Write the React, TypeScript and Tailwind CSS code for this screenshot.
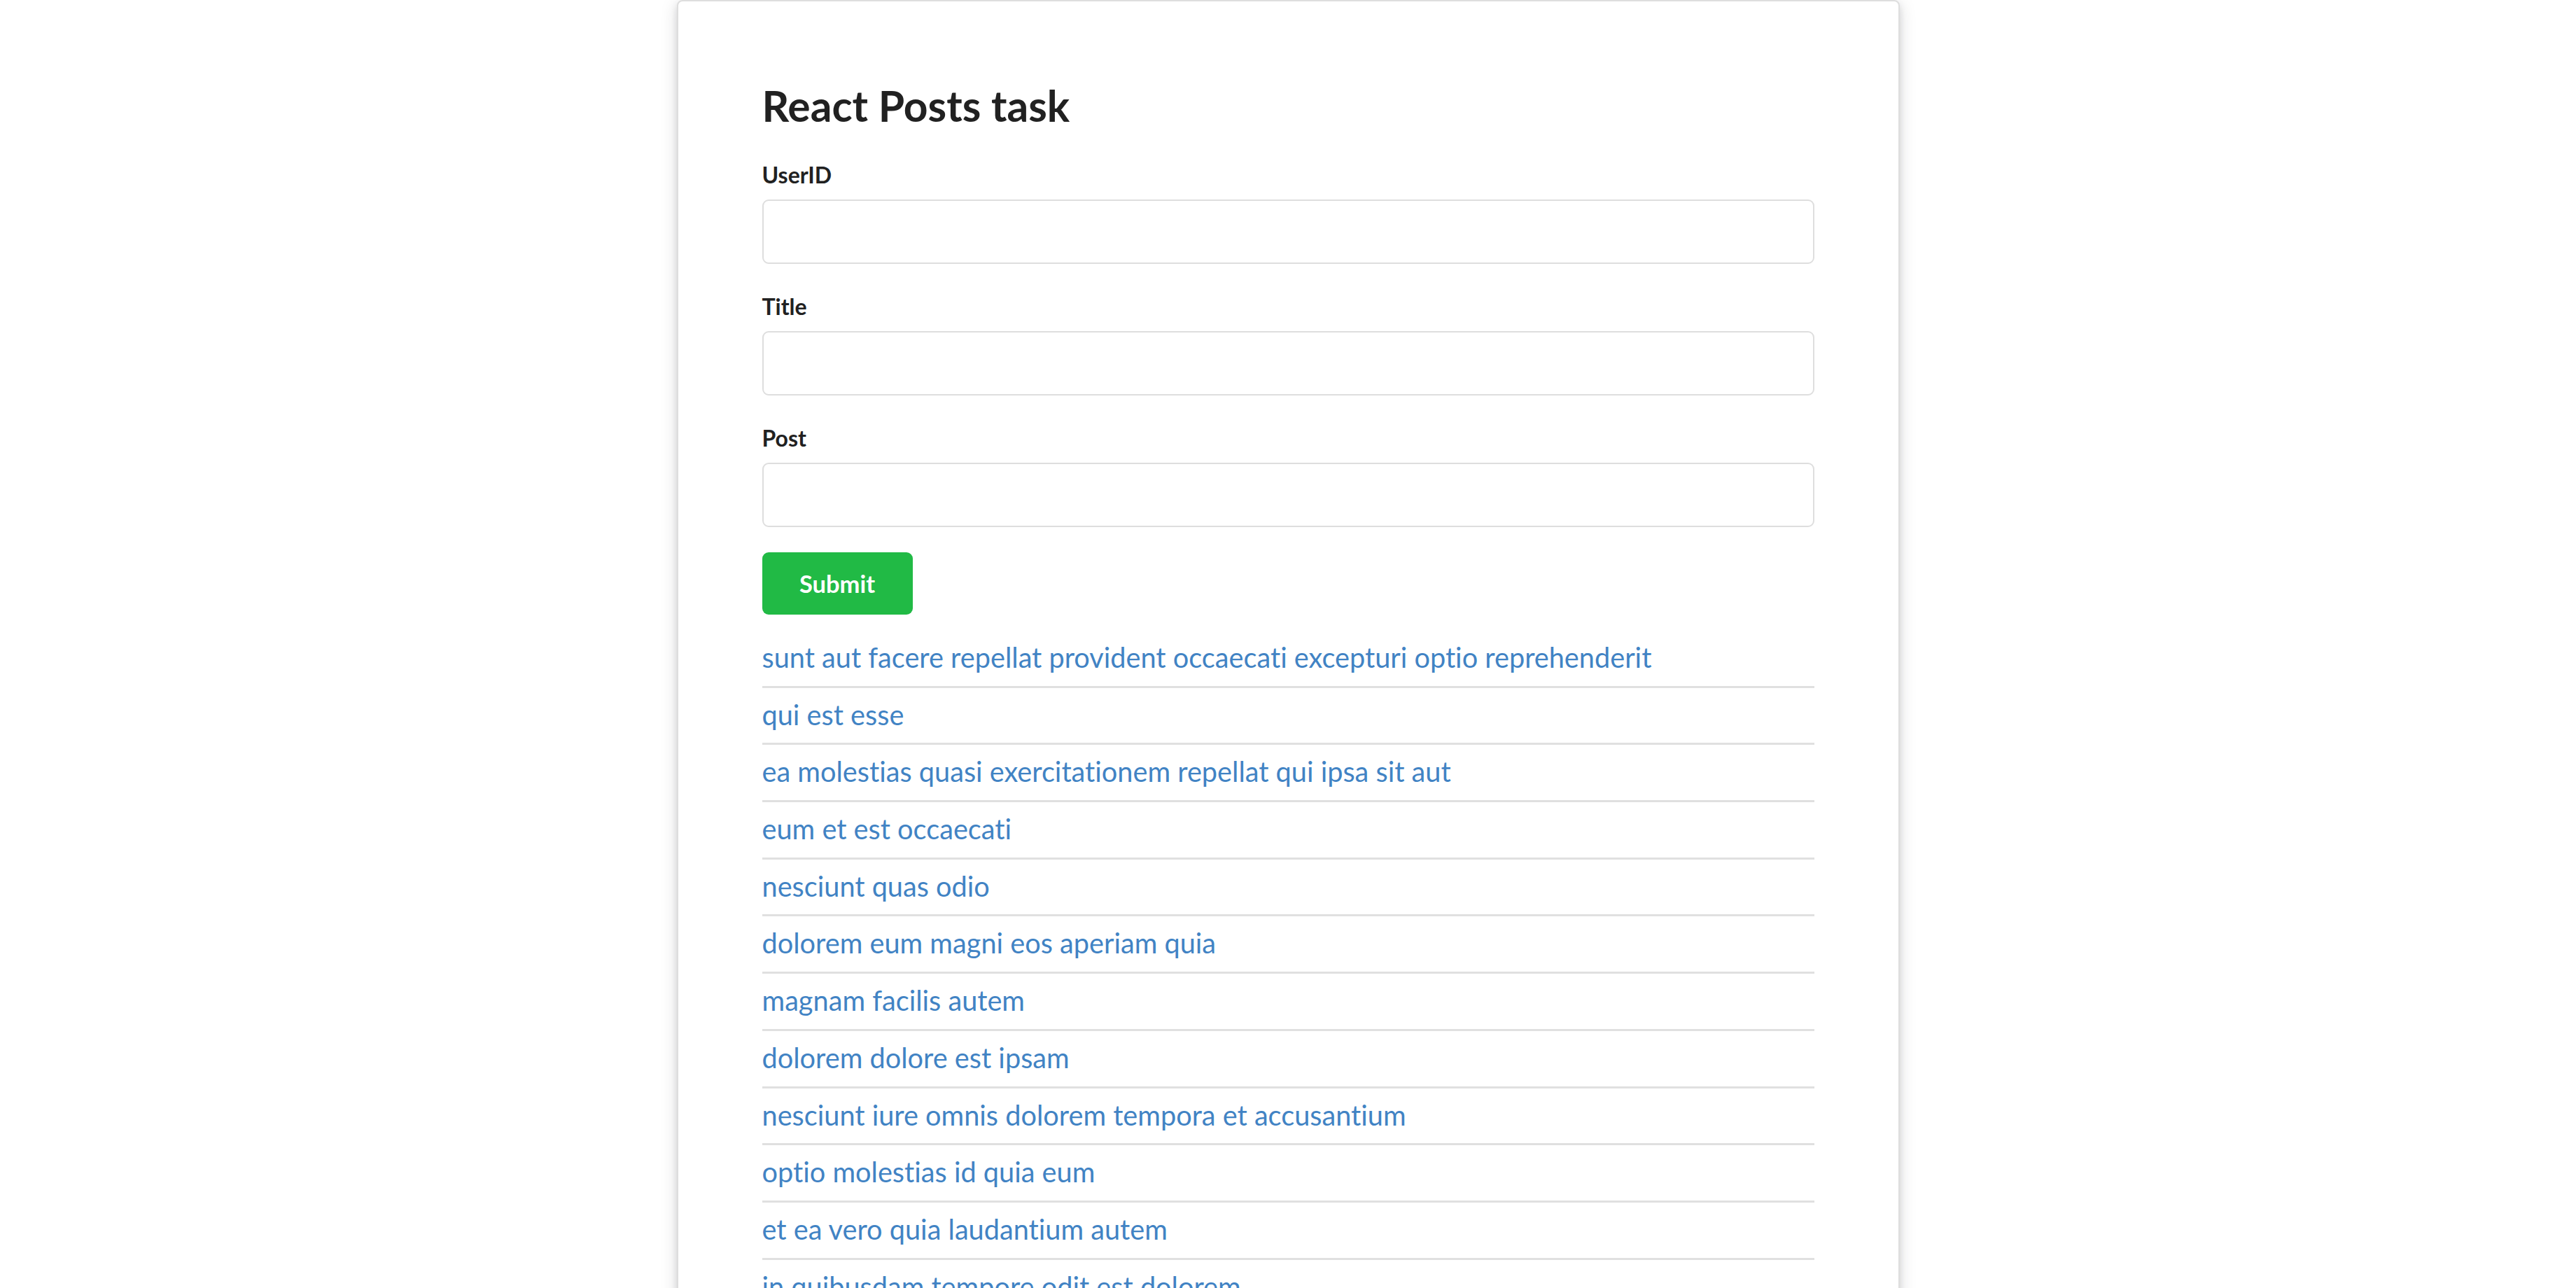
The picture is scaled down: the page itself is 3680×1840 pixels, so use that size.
import { useState } from 'react';

// First page of jsonplaceholder posts, as listed under the form.
const POSTS = [
  'sunt aut facere repellat provident occaecati excepturi optio reprehenderit',
  'qui est esse',
  'ea molestias quasi exercitationem repellat qui ipsa sit aut',
  'eum et est occaecati',
  'nesciunt quas odio',
  'dolorem eum magni eos aperiam quia',
  'magnam facilis autem',
  'dolorem dolore est ipsam',
  'nesciunt iure omnis dolorem tempora et accusantium',
  'optio molestias id quia eum',
  'et ea vero quia laudantium autem',
  'in quibusdam tempore odit est dolorem',
  'dolorum ut in voluptas mollitia et saepe quo animi',
  'voluptatem eligendi optio',
];

function Field({ label, value, onChange }: { label: string; value: string; onChange: (v: string) => void }) {
  return (
    <div className="flex flex-col">
      <label className="mb-[17px] text-[32px] font-bold leading-[37px] text-[#212121]">{label}</label>
      <input
        value={value}
        onChange={(e) => onChange(e.target.value)}
        className="h-[92px] w-full rounded-[9px] border-2 border-[#dedede] bg-white px-[34px] text-[33px] text-[#212121] outline-none"
      />
    </div>
  );
}

export default function App() {
  const [userId, setUserId] = useState('');
  const [title, setTitle] = useState('');
  const [post, setPost] = useState('');

  return (
    <div className="h-screen overflow-hidden bg-white font-['Lato',sans-serif] [font-variant-ligatures:none]">
      <div className="mx-auto min-h-[2400px] w-[1747px] rounded-[8px] border-2 border-[#dedede] bg-white px-[120px] pt-[112px] shadow-[0_5px_10px_rgba(34,36,38,0.12),0_5px_24px_rgba(34,36,38,0.15)]">
        <h1 className="mb-[43px] text-[60.5px] font-bold leading-[74px] text-[#212121]">React Posts task</h1>

        <form className="flex flex-col gap-[42px]" onSubmit={(e) => e.preventDefault()}>
          <Field label="UserID" value={userId} onChange={setUserId} />
          <Field label="Title" value={title} onChange={setTitle} />
          <Field label="Post" value={post} onChange={setPost} />
        </form>

        <button
          type="button"
          className="mt-[36px] flex h-[89px] w-[215px] items-center justify-center rounded-[9px] bg-[#21ba45] text-[34.5px] font-bold text-white"
        >
          Submit
        </button>

        <ul className="mt-[23px] flex flex-col">
          {POSTS.map((p) => (
            <li key={p} className="border-b-[3px] border-[#e0e0e0] pb-[16.7px] pt-[14px]">
              <a href="#" className="text-[39.7px] leading-[48px] text-[#4183c4]">
                {p}
              </a>
            </li>
          ))}
        </ul>
      </div>
    </div>
  );
}
